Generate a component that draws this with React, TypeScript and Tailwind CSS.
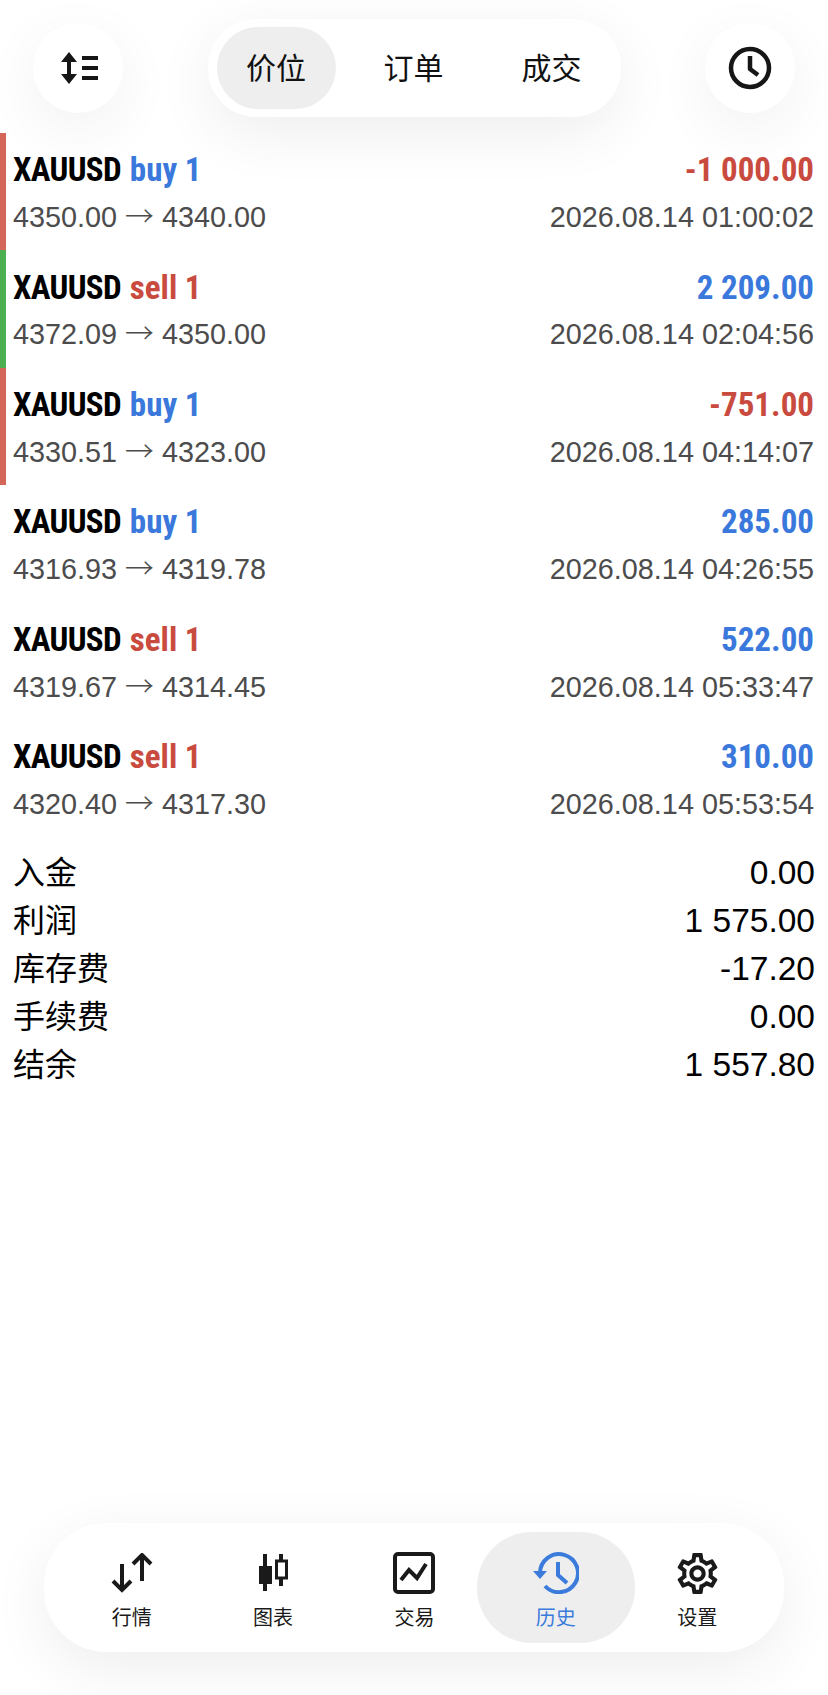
import { MdOutlineSettings } from 'react-icons/md';

interface Deal {
  side: 'buy' | 'sell';
  from: string;
  to: string;
  profit: string;
  time: string;
  marker?: 'red' | 'green';
}

const deals: Deal[] = [
  { side: 'buy', from: '4350.00', to: '4340.00', profit: '-1 000.00', time: '2026.08.14 01:00:02', marker: 'red' },
  { side: 'sell', from: '4372.09', to: '4350.00', profit: '2 209.00', time: '2026.08.14 02:04:56', marker: 'green' },
  { side: 'buy', from: '4330.51', to: '4323.00', profit: '-751.00', time: '2026.08.14 04:14:07', marker: 'red' },
  { side: 'buy', from: '4316.93', to: '4319.78', profit: '285.00', time: '2026.08.14 04:26:55' },
  { side: 'sell', from: '4319.67', to: '4314.45', profit: '522.00', time: '2026.08.14 05:33:47' },
  { side: 'sell', from: '4320.40', to: '4317.30', profit: '310.00', time: '2026.08.14 05:53:54' },
];

const totals = [
  ['入金', '0.00'],
  ['利润', '1 575.00'],
  ['库存费', '-17.20'],
  ['手续费', '0.00'],
  ['结余', '1 557.80'],
];

const SortIcon = () => (
  <svg className="ml-[2px]" width="38" height="32" viewBox="0 0 38 32" fill="none" stroke="#161616">
    <path d="M9 6v20" strokeWidth="4" />
    <path d="M1 10l8-10 8 10zM1 22l8 10 8-10z" fill="#161616" stroke="none" />
    <path d="M22 6h16M22 16h16M22 26h16" strokeWidth="4" />
  </svg>
);

const ClockIcon = () => (
  <svg width="44" height="44" viewBox="0 0 44 44" fill="none" stroke="#161616" strokeWidth="4.5">
    <circle cx="22" cy="22" r="19" />
    <path d="M22 10v13l8 6" strokeLinejoin="round" />
  </svg>
);

const QuotesIcon = () => (
  <svg width="44" height="40" viewBox="0 0 44 40" fill="none" stroke="#1a1a1a" strokeWidth="4">
    <path d="M12 11v27M3 28l9 9 9-9" />
    <path d="M32 1v27M23 11l9-9 9 9" />
  </svg>
);

const ChartIcon = () => (
  <svg width="32" height="40" viewBox="0 0 32 40" fill="none" stroke="#1a1a1a">
    <path d="M8 1v37" strokeWidth="4" />
    <rect x="2" y="13" width="13" height="18" fill="#1a1a1a" stroke="none" />
    <path d="M24 1v32" strokeWidth="4" />
    <rect x="19.5" y="8" width="10" height="17" fill="#fff" strokeWidth="3" />
  </svg>
);

const TradeIcon = () => (
  <svg width="42" height="42" viewBox="0 0 42 42" fill="none" stroke="#1a1a1a">
    <rect x="2" y="2" width="38" height="38" rx="3" strokeWidth="4" />
    <path d="M8 28l8-10 8 8 9-14" strokeWidth="4" />
  </svg>
);

const HistoryIcon = () => (
  <svg width="46" height="42" viewBox="0 0 46 42" fill="none" stroke="#3a7bdc">
    <path d="M7 21A19 19 0 1 1 12 34" strokeWidth="4" />
    <path d="M0 19h14l-7 8z" fill="#3a7bdc" stroke="none" />
    <path d="M25 10v13l9 8" strokeWidth="4" />
  </svg>
);

const navItems = [
  { label: '行情', icon: <QuotesIcon /> },
  { label: '图表', icon: <ChartIcon /> },
  { label: '交易', icon: <TradeIcon /> },
  { label: '历史', icon: <HistoryIcon />, active: true },
  { label: '设置', icon: <MdOutlineSettings size={49} color="#1a1a1a" /> },
];

const DealRow = ({ deal }: { deal: Deal }) => {
  const marker =
    deal.marker === 'red' ? 'border-[#d4665a]' : deal.marker === 'green' ? 'border-[#4caf50]' : 'border-transparent';
  const loss = deal.profit.startsWith('-');

  return (
    <div className={`h-[117.4px] border-l-[6px] pl-[7px] pr-[14px] pt-[15px] ${marker}`}>
      <div className="flex h-[44px] items-center justify-between font-['Liberation_Sans_Narrow','Roboto_Condensed',sans-serif] text-[33px] font-bold">
        <span className="text-black">
          <span className="mr-[9px] tracking-[-0.7px]">XAUUSD</span>
          <span className={deal.side === 'buy' ? 'text-[#3a78dc]' : 'text-[#c94a3e]'}>{deal.side} 1</span>
        </span>
        <span className={loss ? 'text-[#c94a3e]' : 'text-[#3a78dc]'}>{deal.profit}</span>
      </div>
      <div className="mt-[5px] flex h-[40px] items-center justify-between text-[28.8px] leading-[40px] text-[#4c4c4c]">
        <span>
          {deal.from} <span className="font-['Noto_Sans_CJK_SC',sans-serif] font-light leading-none">→</span> {deal.to}
        </span>
        <span>{deal.time}</span>
      </div>
    </div>
  );
};

export default function App() {
  return (
    <div className="flex h-[1695px] w-[828px] flex-col overflow-hidden bg-white font-['Liberation_Sans','Noto_Sans_CJK_SC',sans-serif]">
      <header className="flex items-center justify-between px-[33px] pt-[19px]">
        <button className="flex h-[90px] w-[90px] items-center justify-center rounded-full bg-white shadow-[0_16px_60px_rgba(0,0,0,0.06)]">
          <SortIcon />
        </button>
        <div className="flex h-[98px] w-[413px] items-center rounded-[48px] bg-white px-[9px] text-[30px] text-[#111] shadow-[0_16px_60px_rgba(0,0,0,0.07)]">
          <span className="flex h-[82px] w-[119px] items-center justify-center rounded-[42px] bg-[#eeeeee]">价位</span>
          <span className="flex w-[156px] justify-center">订单</span>
          <span className="flex w-[120px] justify-center">成交</span>
        </div>
        <button className="flex h-[90px] w-[90px] items-center justify-center rounded-full bg-white shadow-[0_16px_60px_rgba(0,0,0,0.06)]">
          <ClockIcon />
        </button>
      </header>

      <main className="mt-[16px] flex-1">
        {deals.map((deal) => (
          <DealRow key={deal.time} deal={deal} />
        ))}
        <div className="mt-[12px] px-[13px] text-[32px] text-black">
          {totals.map(([name, value]) => (
            <div key={name} className="flex h-[48px] items-center justify-between">
              <span>{name}</span>
              <span className="text-[33.5px]">{value}</span>
            </div>
          ))}
        </div>
      </main>

      <footer className="px-[44px] pb-[43px]">
        <nav className="flex h-[129px] items-center rounded-[62px] bg-white px-[17px] shadow-[0_16px_60px_rgba(0,0,0,0.07)]">
          {navItems.map((item) => (
            <div
              key={item.label}
              className={`flex h-[111px] shrink-0 flex-col items-center rounded-[55px] pt-[18px] ${item.active ? '-mx-[8px] w-[157.4px] bg-[#eeeeee] text-[#3a7bdc]' : 'w-[141.4px] text-[#1a1a1a]'}`}
            >
              <div className="flex h-[46px] items-center justify-center">{item.icon}</div>
              <span className="mt-[7px] text-[20px] leading-[30px]">{item.label}</span>
            </div>
          ))}
        </nav>
      </footer>
    </div>
  );
}
